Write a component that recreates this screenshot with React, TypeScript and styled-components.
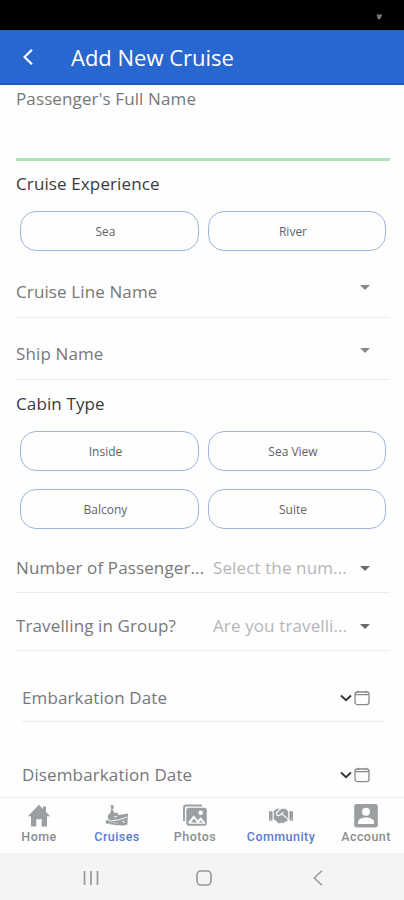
import React from 'react';
import styled, { createGlobalStyle } from 'styled-components';
import { FaHandshake } from 'react-icons/fa';

const GlobalStyle = createGlobalStyle`
  * { box-sizing: border-box; }
  body { margin: 0; background: #fefefe; }
`;

const Screen = styled.div`
  width: 404px;
  height: 900px;
  display: flex;
  flex-direction: column;
  overflow: hidden;
  background: #fefefe;
  font-family: 'Open Sans', 'Noto Sans', sans-serif;
`;

const StatusBar = styled.div`
  flex: 0 0 30px;
  display: flex;
  justify-content: flex-end;
  padding: 14px 21px 0 0;
  background: #000;
`;

const Header = styled.header`
  flex: 0 0 55px;
  display: flex;
  align-items: center;
  gap: 38px;
  padding: 1px 0 0 23px;
  background: #2867cf;
  border-bottom: 2px solid #185ac2;
  color: #fff;
`;

const Title = styled.h1`
  margin: 0;
  font-size: 22px;
  font-weight: 400;
  line-height: 30px;
  white-space: nowrap;
`;

const Form = styled.main`
  flex: 1;
  min-height: 0;
  overflow: hidden;
  padding: 0 14px 0 16px;
`;

const NameField = styled.div`
  height: 76px;
  padding-top: 2px;
  border-bottom: 3px solid #ade3b9;
`;

const Label = styled.span<{ $strong?: boolean; $width?: number }>`
  flex: none;
  width: ${(p) => (p.$width ? `${p.$width}px` : 'auto')};
  white-space: nowrap;
  font-size: 17px;
  line-height: 24px;
  letter-spacing: 0.12px;
  color: ${(p) => (p.$strong ? '#3b3b3d' : '#77777a')};
`;

const SectionTitle = styled.div<{ $height: number }>`
  display: flex;
  align-items: center;
  height: ${(p) => p.$height}px;
`;

const PillGrid = styled.div`
  display: grid;
  grid-template-columns: 179px 178px;
  grid-auto-rows: 40px;
  gap: 18px 9px;
  padding: 4px 4px 0;
`;

const Pill = styled.button`
  padding: 1px 8px 0 0;
  border: 1px solid #a3b5dd;
  border-radius: 16px;
  background: #fefefe;
  color: #626266;
  font: 400 12px 'Open Sans', sans-serif;
`;

const Row = styled.div<{ $height: number; $shift: number; $inset?: boolean }>`
  display: flex;
  align-items: center;
  height: ${(p) => p.$height}px;
  margin: ${(p) => (p.$inset ? '0 5px 0 6px' : '0')};
  padding: ${(p) => p.$shift}px ${(p) => (p.$inset ? 15 : 20)}px 0 0;
  border-bottom: 1px solid #ececed;
`;

const Placeholder = styled(Label)`
  margin-left: 8px;
  color: #b5b5b7;
`;

const Caret = styled.i<{ $raised?: boolean }>`
  margin-left: auto;
  margin-bottom: ${(p) => (p.$raised ? 8 : 0)}px;
  border: 5px solid transparent;
  border-top-color: ${(p) => (p.$raised ? '#88888a' : '#6a6a6c')};
  border-bottom-width: 0;
`;

const DateIcons = styled.span`
  display: flex;
  align-items: center;
  gap: 2px;
  margin-left: auto;
`;

const TabBar = styled.nav`
  flex: 0 0 56px;
  display: grid;
  grid-template-columns: 78px 78px 78px 94px 76px;
  border-top: 1px solid #ededee;
  background: #fefefe;
`;

const Tab = styled.a<{ $active?: boolean }>`
  display: flex;
  flex-direction: column;
  align-items: center;
  padding-top: 6px;
  color: #9b9fa1;

  span {
    font: 500 12.5px/17px Roboto, sans-serif;
    letter-spacing: 0.45px;
    color: ${(p) => (p.$active ? '#5a7bd0' : '#8c8c8f')};
  }
`;

const SystemBar = styled.footer`
  flex: 0 0 47px;
  display: grid;
  grid-template-columns: 16px 16px 10px;
  align-items: center;
  column-gap: 97px;
  padding: 3px 0 0 83px;
  background: #f4f4f5;
  color: #97979a;

  svg:last-child {
    justify-self: start;
    margin-left: 4px;
  }
`;

const icon = { fill: 'none', stroke: 'currentColor' };

const BackIcon = () => (
  <svg width="10" height="16" viewBox="0 0 10 16" {...icon} strokeWidth="2.1">
    <path d="M9 .8 1.5 8 9 15.2" />
  </svg>
);

const DatePickerIcons = () => (
  <DateIcons>
    <svg width="12" height="8" viewBox="0 0 12 8" fill="none" stroke="#343436" strokeWidth="1.9">
      <path d="m1 1.5 5 4.8 5-4.8" />
    </svg>
    <svg width="16" height="16" viewBox="0 0 16 16" fill="none" stroke="#89898c" strokeWidth="1.3">
      <rect x="1" y="2" width="14" height="12.6" rx="2.4" />
      <path d="M1.5 4.6h13M4 .8V3M12 .8V3" />
    </svg>
  </DateIcons>
);

const HomeIcon = () => (
  <svg width="24" height="24" viewBox="0 0 24 24" fill="currentColor">
    <path d="M12 .8.8 12.3H4V22.5h5.3v-7.2h5.4v7.2H20V12.3h3.2L19 8.1V2.5h-3V5z" />
  </svg>
);

const CruiseIcon = () => (
  <svg width="24" height="24" viewBox="0 0 24 24" fill="currentColor">
    <path d="M5.6 1.2 8 .8 9 4.2l-1.6.9L9.6 9l3.1-.2.7 2.2 9.6-1.4-.6 10.9c-4.5 1.5-7.2.8-10.7.8L.8 19.6v-3.5l3 .5-1.3-4.8L5.3 9l1-4.2z" />
    <path d="M3.6 16.5c5.3.8 12.8-1 18.4-3.4M9 12.7l3-.3" fill="none" stroke="#eceeee" strokeWidth="1.1" />
    <path d="m2.6 19.4 5-1 5.4 1.4" fill="none" stroke="#c9cccd" strokeWidth=".8" />
    <circle cx="18.5" cy="17.7" r="1.1" fill="#eceeee" />
  </svg>
);

const PhotosIcon = () => (
  <svg width="26" height="24" viewBox="0 0 26 24">
    <path d="M2 17V3.5q0-2 2-2h16" fill="none" stroke="currentColor" strokeWidth="1.9" />
    <rect x="4.3" y="3.7" width="20.5" height="18" rx="2.5" fill="currentColor" />
    <circle cx="18.7" cy="8.8" r="2.3" fill="#fefefe" />
    <path d="m6.2 18.3 5.5-7 3.8 5 3.4-3 4.2 5.2v1.3H7z" fill="#fefefe" />
    <path d="m9 18.5 2.9-4 3.4 4zM17 18.5l2-2 1.8 2z" fill="currentColor" />
  </svg>
);

const AccountIcon = () => (
  <svg width="24" height="24" viewBox="0 0 24 24">
    <rect x=".2" y="0" width="23.6" height="23.5" rx="2.3" fill="currentColor" />
    <circle cx="12" cy="7.8" r="4" fill="#fefefe" />
    <path d="M4 20v-2.1c0-3 4.8-4.4 8-4.4s8 1.4 8 4.4V20z" fill="#fefefe" />
  </svg>
);

const tabs = [
  { label: 'Home', icon: <HomeIcon /> },
  { label: 'Cruises', icon: <CruiseIcon />, active: true },
  { label: 'Photos', icon: <PhotosIcon /> },
  { label: 'Community', icon: <FaHandshake size={24} />, active: true },
  { label: 'Account', icon: <AccountIcon /> },
];

const Pills = ({ items }: { items: string[] }) => (
  <PillGrid>
    {items.map((item) => (
      <Pill key={item}>{item}</Pill>
    ))}
  </PillGrid>
);

export default function App() {
  return (
    <Screen>
      <GlobalStyle />
      <StatusBar>
        <svg width="7" height="6" viewBox="0 0 7 6" fill="#777">
          <path d="M.5.5h5.8L4 5.5 2 5z" />
        </svg>
      </StatusBar>
      <Header>
        <BackIcon />
        <Title>Add New Cruise</Title>
      </Header>
      <Form>
        <NameField>
          <Label>Passenger's Full Name</Label>
        </NameField>
        <SectionTitle $height={46}>
          <Label $strong>Cruise Experience</Label>
        </SectionTitle>
        <Pills items={['Sea', 'River']} />
        <Row $height={67} $shift={15}>
          <Label>Cruise Line Name</Label>
          <Caret $raised />
        </Row>
        <Row $height={62} $shift={11}>
          <Label>Ship Name</Label>
          <Caret $raised />
        </Row>
        <SectionTitle $height={47}>
          <Label $strong>Cabin Type</Label>
        </SectionTitle>
        <Pills items={['Inside', 'Sea View', 'Balcony', 'Suite']} />
        <Row $height={64} $shift={15}>
          <Label $width={189}>Number of Passenger...</Label>
          <Placeholder>Select the num...</Placeholder>
          <Caret />
        </Row>
        <Row $height={58} $shift={9}>
          <Label $width={189}>Travelling in Group?</Label>
          <Placeholder>Are you travelli...</Placeholder>
          <Caret />
        </Row>
        <Row $height={71} $shift={24} $inset>
          <Label>Embarkation Date</Label>
          <DatePickerIcons />
        </Row>
        <Row $height={90} $shift={17} $inset>
          <Label>Disembarkation Date</Label>
          <DatePickerIcons />
        </Row>
      </Form>
      <TabBar>
        {tabs.map((tab) => (
          <Tab key={tab.label} $active={tab.active}>
            {tab.icon}
            <span>{tab.label}</span>
          </Tab>
        ))}
      </TabBar>
      <SystemBar>
        <svg width="16" height="16" viewBox="0 0 16 16" {...icon} strokeWidth="1.7">
          <path d="M1.5 1v14M8 1v14M14.5 1v14" />
        </svg>
        <svg width="16" height="16" viewBox="0 0 16 16" {...icon} strokeWidth="1.6">
          <rect x="1" y="1" width="14" height="14" rx="4" />
        </svg>
        <svg width="10" height="16" viewBox="0 0 10 16" {...icon} strokeWidth="1.5">
          <path d="M9 .7 1.2 8 9 15.3" />
        </svg>
      </SystemBar>
    </Screen>
  );
}
